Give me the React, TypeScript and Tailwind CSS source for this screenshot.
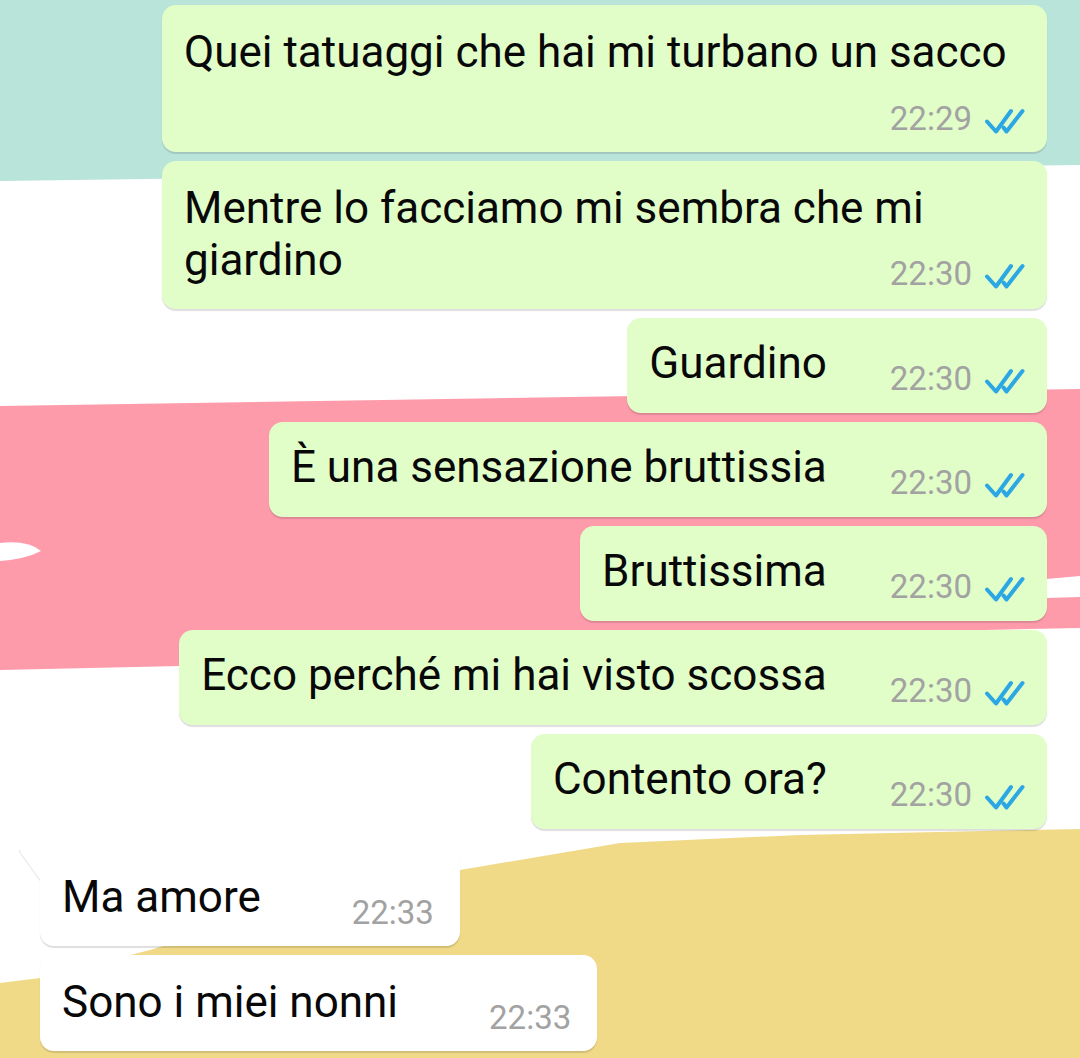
import * as React from 'react'

const TEXT = 'text-[44px] leading-[52px] text-[#080808]'
const TIME = 'text-[33px] leading-[36px] text-[#a2a2a2]'
const BUBBLE = 'rounded-[14px] shadow-[0_1.5px_1px_rgba(0,0,0,0.13)]'

function Ticks() {
  return (
    <svg
      width="40"
      height="28"
      viewBox="0 0 40 28"
      fill="none"
      stroke="#2ba7e4"
      strokeWidth="4"
      strokeLinecap="round"
      strokeLinejoin="round"
      className="ml-[13px] translate-y-[2px]"
    >
      <path d="M2 14.5 L11 24.5 L26 4" />
      <path d="M18.5 20.5 L21.5 24.5 L37.5 4" />
    </svg>
  )
}

function Stamp({ time, read }: { time: string; read?: boolean }) {
  return (
    <div className="flex items-center">
      <span className={TIME}>{time}</span>
      {read && <Ticks />}
    </div>
  )
}

function Out({ text, time }: { text: string; time: string }) {
  return (
    <div className={`flex self-end bg-[#e1fdc8] pb-[16px] pl-[22px] pr-[22px] pt-[19px] ${BUBBLE}`}>
      <span className={TEXT}>{text}</span>
      <span className="w-[63px] shrink-0" />
      <div className="mt-[24px]">
        <Stamp time={time} read />
      </div>
    </div>
  )
}

function In({ text, time, tail }: { text: string; time: string; tail?: boolean }) {
  return (
    <div
      className={`relative flex self-start bg-white pb-[15px] pl-[22px] pr-[26px] pt-[21px] ${BUBBLE} ${tail ? 'rounded-tl-none' : ''}`}
    >
      {tail && (
        <svg
          width="22"
          height="32"
          viewBox="0 0 22 32"
          className="absolute left-[-21px] top-0 drop-shadow-[-0.5px_0.5px_0.5px_rgba(0,0,0,0.12)]"
        >
          <path d="M22 0 L3 0 Q0 0 1.5 2.5 L22 31 Z" fill="#ffffff" />
        </svg>
      )}
      <span className={TEXT}>{text}</span>
      <span className="w-[91px] shrink-0" />
      <div className="mt-[24px]">
        <Stamp time={time} />
      </div>
    </div>
  )
}

function Wallpaper() {
  return (
    <svg
      className="absolute inset-0"
      width="1080"
      height="1058"
      viewBox="0 0 1080 1058"
    >
      <path d="M0 0 L1080 0 L1080 165 L700 170 L300 177 L0 181 Z" fill="#b9e4da" />
      <path
        d="M0 406 L1080 389 L1080 576 L1046 579 L1046 598 L1080 597 L1080 628 L700 636 L300 656 L180 666 L0 670 Z"
        fill="#fe9bab"
      />
      <path d="M0 543 Q28 540 41 551 Q26 559 0 561 Z" fill="#ffffff" />
      <path
        d="M0 983 L40 978 L150 950 L300 905 L460 870 L620 843 L800 835 L1080 829 L1080 1058 L0 1058 Z"
        fill="#f0da88"
      />
    </svg>
  )
}

export default function App() {
  return (
    <div className="relative h-[1058px] w-[1080px] overflow-hidden bg-white font-['Roboto','Liberation_Sans',sans-serif]">
      <Wallpaper />
      <div className="relative flex flex-col gap-[9px] pl-[40px] pr-[33px] pt-[5px]">
        {/* long messages take the full bubble width */}
        <div className={`w-[885px] self-end bg-[#e1fdc8] pb-[15px] pl-[22px] pr-[22px] pt-[21px] ${BUBBLE}`}>
          <p className={TEXT}>Quei tatuaggi che hai mi turbano un sacco</p>
          <div className="mt-[23px] flex justify-end">
            <Stamp time="22:29" read />
          </div>
        </div>
        <div className={`w-[885px] self-end bg-[#e1fdc8] pb-[17px] pl-[22px] pr-[22px] pt-[21px] ${BUBBLE}`}>
          <p className={TEXT}>Mentre lo facciamo mi sembra che mi</p>
          <div className="flex items-start justify-between">
            <span className={TEXT}>giardino</span>
            <div className="mt-[22px]">
              <Stamp time="22:30" read />
            </div>
          </div>
        </div>
        <Out text="Guardino" time="22:30" />
        <Out text="È una sensazione bruttissia" time="22:30" />
        <Out text="Bruttissima" time="22:30" />
        <Out text="Ecco perché mi hai visto scossa" time="22:30" />
        <Out text="Contento ora?" time="22:30" />
        <div className="mt-[12px] flex flex-col gap-[9px]">
          <In text="Ma amore" time="22:33" tail />
          <In text="Sono i miei nonni" time="22:33" />
        </div>
      </div>
    </div>
  )
}
